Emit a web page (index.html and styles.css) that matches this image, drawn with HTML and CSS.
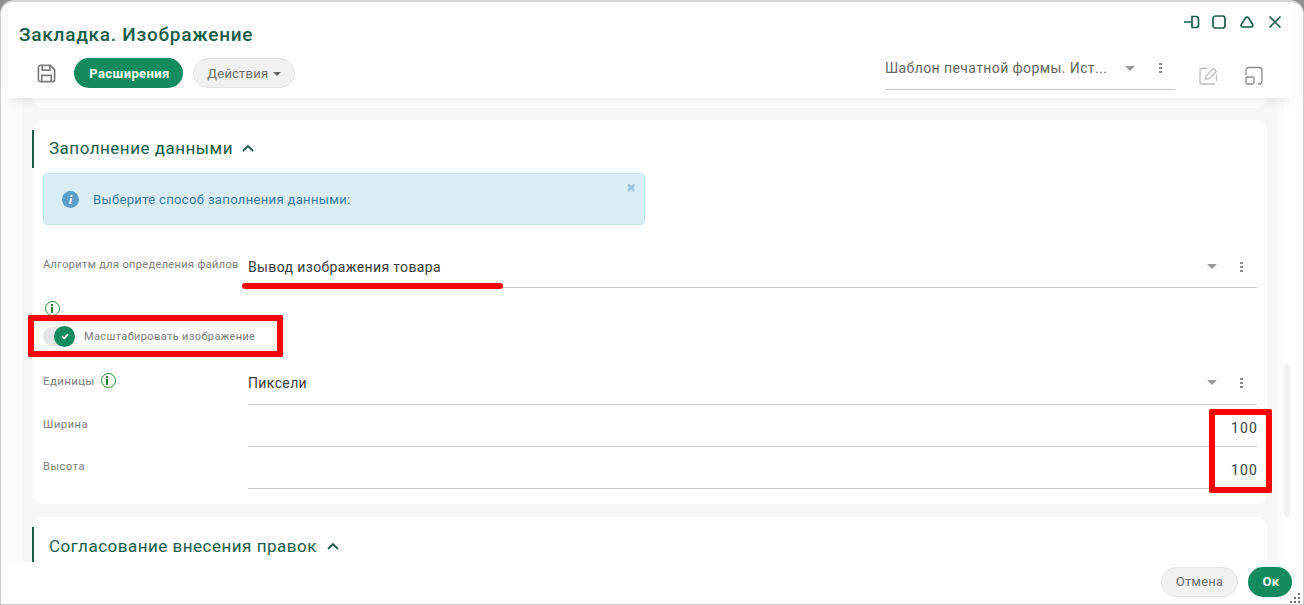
FILE: index.html
```html
<!DOCTYPE html>
<html lang="ru">
<head>
<meta charset="utf-8">
<title>Закладка. Изображение</title>
<link rel="stylesheet" href="styles.css">
</head>
<body>
<div class="window">
  <header class="header">
    <div class="title-row">
      <h1 class="title">Закладка. Изображение</h1>
      <div class="win-controls">
        <svg class="win-icon" viewBox="0 0 18 18"><path d="M2 9h8M10 3.500h4a2.500 2.500 0 0 1 2.500 2.500v6a2.500 2.500 0 0 1-2.500 2.500h-4z"/></svg>
        <svg class="win-icon" viewBox="0 0 18 18"><rect x="3" y="3" width="12" height="12" rx="2.500"/></svg>
        <svg class="win-icon" viewBox="0 0 18 18"><path d="M7.600 4.800a1.700 1.700 0 0 1 2.800 0l4.200 6.400c.8 1.200 0 2.800-1.400 2.800H4.800c-1.400 0-2.200-1.600-1.400-2.800z"/></svg>
        <svg class="win-icon" viewBox="0 0 18 18"><path d="M3.500 3.500l11 11M14.500 3.500l-11 11"/></svg>
      </div>
    </div>
    <div class="toolbar">
      <svg class="save-icon" viewBox="0 0 20 20"><path d="M3.500 1.500h10.500l4.500 4.500v10.500a2 2 0 0 1-2 2h-13a2 2 0 0 1-2-2v-13a2 2 0 0 1 2-2z"/><path d="M5.500 1.500v5h8v-5M5 18.500v-6.500h10v6.500"/></svg>
      <button class="btn btn-primary">Расширения</button>
      <button class="btn btn-light">Действия <span class="caret"></span></button>
      <div class="spacer"></div>
      <div class="template-select">
        <span class="template-text">Шаблон печатной формы. Ист...</span>
        <span class="arrow"></span>
        <span class="dots"><i></i><i></i><i></i></span>
      </div>
      <svg class="tool-icon edit" viewBox="0 0 20 20"><path d="M9 2.500H3.500A1.500 1.500 0 0 0 2 4v12.500A1.500 1.500 0 0 0 3.500 18H17M18.500 8.500V15M7.500 13.500l.8-3.800 7-7.400 3 2.900-7 7.400z"/></svg>
      <svg class="tool-icon expand" viewBox="0 0 20 20"><path d="M2 9V4a2.500 2.500 0 0 1 2.500-2.500h11A2.500 2.500 0 0 1 18 4v11a3 3 0 0 1-3 3h-1"/><rect x="2" y="11" width="8" height="7" rx="1.500"/></svg>
    </div>
  </header>
  <main class="body">
    <div class="content">
      <section class="card card-top"></section>
      <section class="card card-main">
        <div class="card-head">
          <h2 class="card-title">Заполнение данными</h2>
          <svg class="chev" viewBox="0 0 14 10"><path d="M2 8l5-5 5 5"/></svg>
        </div>
        <div class="alert">
          <span class="alert-icon">i</span>
          <span class="alert-text">Выберите способ заполнения данными:</span>
          <span class="alert-close">✖</span>
        </div>
        <div class="field field-algo">
          <div class="field-label">Алгоритм для определения файлов</div>
          <div class="field-input">
            <span class="value">Вывод изображения товара</span>
            <span class="arrow"></span>
            <span class="dots"><i></i><i></i><i></i></span>
          </div>
        </div>
        <div class="info-row"><span class="info-i"><b></b></span></div>
        <div class="toggle-row">
          <span class="toggle"><span class="knob"><svg viewBox="0 0 10 10"><path d="M2 5.200l2.200 2.200L8 3.200"/></svg></span></span>
          <span class="toggle-label">Масштабировать изображение</span>
        </div>
        <div class="field field-units">
          <div class="field-label">Единицы <span class="info-i"><b></b></span></div>
          <div class="field-input">
            <span class="value">Пиксели</span>
            <span class="arrow"></span>
            <span class="dots"><i></i><i></i><i></i></span>
          </div>
        </div>
        <div class="field field-num">
          <div class="field-label">Ширина</div>
          <div class="field-input"><span class="num">100</span></div>
        </div>
        <div class="field field-num">
          <div class="field-label">Высота</div>
          <div class="field-input"><span class="num">100</span></div>
        </div>
      </section>
      <section class="card card-next">
        <div class="card-head">
          <h2 class="card-title">Согласование внесения правок</h2>
          <svg class="chev" viewBox="0 0 14 10"><path d="M2 8l5-5 5 5"/></svg>
        </div>
      </section>
    </div>
    <div class="scrollbar"><div class="thumb"></div></div>
  </main>
  <footer class="footer">
    <button class="btn btn-light btn-cancel">Отмена</button>
    <button class="btn btn-primary btn-ok">Ок</button>
    <svg class="grip" viewBox="0 0 12 12"><path d="M9 0h2v2H9zM5 4h2v2H5zM9 4h2v2H9zM1 8h2v2H1zM5 8h2v2H5zM9 8h2v2H9z"/></svg>
  </footer>
  <div class="mark mark-line"></div>
  <div class="mark mark-toggle"></div>
  <div class="mark mark-nums"></div>
</div>
</body>
</html>
```
FILE: styles.css
```css
* { box-sizing: border-box; }
html, body { margin: 0; padding: 0; }
body { width: 1304px; height: 605px; overflow: hidden; background: #8f8f8f; font-family: Roboto, "Liberation Sans", sans-serif; }
.window { position: relative; width: 1304px; height: 605px; background: #fff; border: 1px solid #cfcfcf; border-top: 2px solid #d4d4d4; border-radius: 14px 14px 0 0; display: flex; flex-direction: column; overflow: hidden; }
.header { height: 96px; flex: none; position: relative; z-index: 2; background: #fff; box-shadow: 0 4px 10px rgba(0,0,0,.07); margin: 0 11px 0 7px; padding-left: 11px; }
.title-row { height: 56px; display: flex; align-items: flex-start; justify-content: space-between; }
.title { margin: 21px 0 0; font-size: 19px; line-height: 24px; font-weight: 500; color: #1a5c4a; letter-spacing: .75px; }
.win-controls { display: flex; gap: 10px; margin: 11px 8px 0 0; }
.win-icon { width: 18px; height: 18px; fill: none; stroke: #1a5c4a; stroke-width: 1.700; }
.toolbar { display: flex; align-items: center; height: 30px; padding-left: 18px; }
.save-icon { width: 19px; height: 19px; fill: none; stroke: #7d7d7d; stroke-width: 1.800; margin-right: 18px; }
.btn { border-radius: 15px; height: 30px; font-family: inherit; font-size: 13px; letter-spacing: .2px; padding: 0; }
.btn-primary { background: #148a5f; border: 0; color: #fff; font-weight: 700; width: 109px; letter-spacing: .4px; padding-left: 2px; }
.btn-light { background: #f1f1f1; border: 1px solid #e3e3e3; color: #6f6f6f; width: 102px; margin-left: 10px; }
.caret { display: inline-block; vertical-align: middle; border: 4px solid transparent; border-top-color: #666; border-bottom: 0; margin-left: 1px; }
.spacer { flex: 1; }
.template-select { width: 290px; height: 37px; margin-top: -3px; margin-right: 23px; border-bottom: 1px solid #c4c4c4; display: flex; align-items: center; padding-bottom: 6px; }
.template-text { flex: 1; font-size: 14px; color: #666; letter-spacing: .4px; white-space: nowrap; }
.arrow { flex: none; width: 0; height: 0; border: 5px solid transparent; border-top: 5px solid #9a9a9a; border-bottom: 0; }
.dots { flex: none; width: 4px; margin-left: 24px; margin-right: 12px; display: flex; flex-direction: column; gap: 2px; }
.dots i { display: block; height: 2px; width: 3px; background: #8d8d8d; }
.tool-icon { width: 20px; height: 20px; fill: none; stroke-width: 1.300; margin-top: 5px; }
.edit { stroke: #bdbdbd; margin-right: 26px; }
.expand { stroke: #8a8a8a; margin-right: 28px; }
.body { flex: 1; min-height: 0; display: flex; position: relative; }
.content { width: 1276px; margin-left: 7px; background: #f6f6f6; border-left: 15px solid #fbfbfb; border-right: 7px solid #fbfbfb; padding: 0 10px; overflow: hidden; height: 464px; flex: none; }
.scrollbar { width: 6px; background: #fff; padding-top: 266px; height: 464px; }
.thumb { height: 153px; background: #f1f1f1; border-radius: 4px; width: 6px; }
.card { background: #fff; border-radius: 10px; margin-bottom: 13px; }
.card-top { height: 10px; margin-bottom: 12px; border-radius: 0 0 10px 10px; }
.card-main { height: 384px; position: relative; padding: 10px 10px 0 0; }
.card-next { height: 60px; padding-top: 10px; }
.card-head { display: flex; align-items: center; height: 38px; border-left: 2px solid #1a5c4a; margin-left: -1px; padding-left: 15px; gap: 8px; }
.card-title { margin: -3px 0 0; font-size: 17px; font-weight: 400; color: #1a5c4a; letter-spacing: .5px; line-height: 24px; }
.card-next .card-title { margin-top: -1px; }
.card-next .card-head { gap: 9px; }
.card-main .chev { margin-top: -2px; }
.chev { width: 14px; height: 10px; fill: none; stroke: #1a5c4a; stroke-width: 1.800; }
.alert { margin: 5px 0 0 10px; width: 602px; height: 52px; background: #d9edf7; border: 1px solid #bce8f1; border-radius: 4px; display: flex; align-items: center; padding-left: 18px; position: relative; }
.alert-icon { width: 17px; height: 17px; border-radius: 50%; background: #5b9dc9; color: #fff; font: italic 700 13px/17px "Liberation Serif", serif; text-align: center; }
.alert-text { margin-left: 14px; font-size: 13px; color: #3a7ba6; letter-spacing: .35px; }
.alert-close { position: absolute; top: 7px; right: 8px; font-size: 12px; line-height: 14px; color: #9cc4da; }
.field { display: flex; margin-left: 10px; }
.field-label { width: 205px; flex: none; font-size: 11px; color: #7d7d7d; letter-spacing: .35px; line-height: 14px; }
.field-input { flex: 1; display: flex; align-items: center; border-bottom: 1px solid #c8c8c8; height: 42px; }
.value { flex: 1; font-size: 14px; color: #3c3c3c; letter-spacing: .37px; }
.field-input .arrow { margin-right: 1px; }
.field-input .dots { margin-right: 13px; margin-left: 22px; }
.field-algo { margin-top: 28px; height: 39px; }
.field-algo .field-label { padding-top: 5px; }
.field-algo .field-input { height: 38px; padding-bottom: 4px; margin-top: -3px; }
.info-row { margin: 9px 0 0 12px; height: 15px; line-height: 0; }
.info-i { display: inline-block; width: 15px; height: 15px; border: 1.500px solid #1f8a2e; border-radius: 50%; position: relative; vertical-align: middle; }
.info-i b { position: absolute; left: 4.500px; top: 4.500px; width: 2px; height: 6px; background: #1f8a2e; }
.info-i b::before { content: ""; position: absolute; left: 0; top: -3px; width: 2px; height: 2px; background: #1f8a2e; }
.toggle-row { display: flex; align-items: center; margin: 9px 0 0 10px; height: 22px; }
.toggle { width: 32px; height: 19px; background: #e4e6e7; border-radius: 10px; position: relative; flex: none; }
.knob { position: absolute; right: 0; top: -1px; width: 21px; height: 21px; background: #148a5f; border-radius: 50%; display: flex; align-items: center; justify-content: center; }
.knob svg { width: 10px; height: 10px; fill: none; stroke: #fff; stroke-width: 1.800; }
.toggle-label { margin-left: 9px; font-size: 11px; color: #7d7d7d; letter-spacing: .38px; }
.field-units { margin-top: 16px; }
.field-units .field-label { padding-top: 11px; font-size: 11.500px; }
.field-units .field-input { padding-bottom: 2px; }
.field-units .info-i { margin-left: 3px; margin-top: -2px; }
.field-num .field-label { padding-top: 13px; letter-spacing: .6px; }
.field-num .field-input { justify-content: flex-end; }
.num { font-size: 14px; color: #3c3c3c; letter-spacing: 1.100px; margin-right: -1px; padding-top: 4px; }
.footer { position: absolute; left: 0; right: 0; bottom: 0; height: 42px; background: #fff; display: flex; justify-content: flex-end; align-items: center; padding: 0 11px 3px 0; gap: 10px; }
.btn-cancel { width: 77px; margin-left: 0; }
.btn-ok { width: 44px; }
.grip { position: absolute; right: 2px; bottom: -1px; width: 12px; height: 12px; fill: #6a6a6a; }
.mark { position: absolute; z-index: 5; }
.mark-line { left: 241px; top: 281px; width: 261px; height: 6px; background: #f00; border-radius: 3px; }
.mark-toggle { left: 27px; top: 313px; width: 255px; height: 42px; border: 6px solid #f00; border-radius: 2px; }
.mark-nums { left: 1208px; top: 407px; width: 63px; height: 84px; border: 6px solid #f00; border-radius: 2px; }
```
